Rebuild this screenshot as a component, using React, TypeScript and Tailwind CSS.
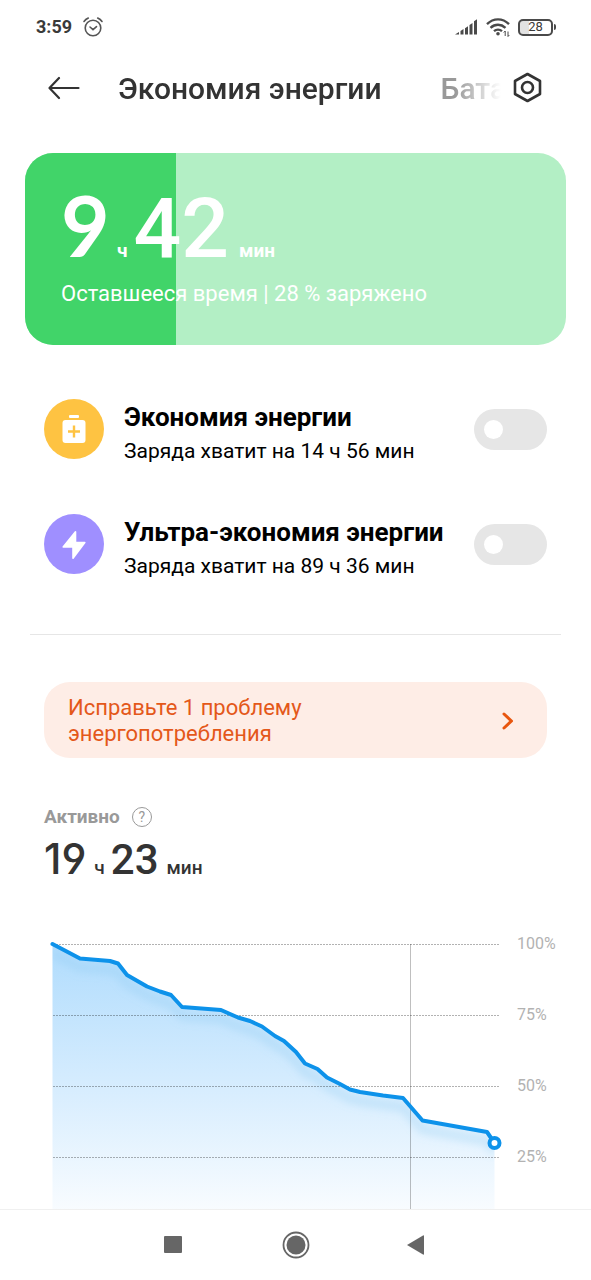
import { useState } from "react"

type Mode = {
  id: string
  title: string
  hint: string
  color: string
  icon: React.ReactNode
}

const modes: Mode[] = [
  {
    id: "saver",
    title: "Экономия энергии",
    hint: "Заряда хватит на 14 ч 56 мин",
    color: "bg-[#fec342]",
    icon: (
      <svg viewBox="0 0 60 60" className="size-full" aria-hidden="true">
        <rect x="25" y="16" width="10" height="3" rx="1" fill="#fff" />
        <rect x="18.500" y="21" width="23" height="23" rx="3" fill="#fff" />
        <path d="M30 26.500v12M24 32.500h12" stroke="#fec342" strokeWidth="2.400" />
      </svg>
    ),
  },
  {
    id: "ultra",
    title: "Ультра-экономия энергии",
    hint: "Заряда хватит на 89 ч 36 мин",
    color: "bg-[#9f8fff]",
    icon: (
      <svg viewBox="0 0 60 60" className="size-full" aria-hidden="true">
        <path
          d="M31.500 17.800V28.500H40.800L29 44.200V33H19.200Z"
          fill="#fff"
          stroke="#fff"
          strokeWidth="1.600"
          strokeLinejoin="round"
        />
      </svg>
    ),
  },
]

const points: [number, number][] = [
  [8.5, 14], [36, 28.5], [66, 31], [74, 33.5], [83, 45], [103, 56.5], [116, 61.5],
  [127, 65], [138, 77], [177, 80], [194, 87.5], [206, 91], [218, 96.5], [231, 106],
  [240, 111], [252, 122], [261, 133.5], [273.5, 139], [283, 147.5], [295, 153.5],
  [306, 159.5], [316, 162], [339, 165.5], [359, 168], [378.5, 190.5], [443, 202], [450.5, 213],
]

const levels = [
  { label: "100%", y: 14.5 },
  { label: "75%", y: 85.5 },
  { label: "50%", y: 156.5 },
  { label: "25%", y: 227.5 },
]

function StatusBar() {
  return (
    <div className="flex h-[54px] items-center justify-between pr-[35px] pl-9 text-[#3a3a3a]">
      <div className="flex items-center gap-2.5">
        <span className="text-lg font-bold">3:59</span>
        <svg width="22" height="22" viewBox="0 0 22 22" fill="none" stroke="#555" strokeWidth="1.6" strokeLinecap="round">
          <circle cx="11" cy="12" r="7.800" />
          <path d="M8 11l3 2.600 3.500-3M2 5.500C3 4 4.500 2.800 6.300 2M20 5.500C19 4 17.500 2.800 15.700 2" />
        </svg>
      </div>
      <div className="flex items-center gap-2">
        <svg width="24" height="18" viewBox="0 0 24 18" fill="#4a4a4a">
          <path d="M1 16.500 5 14v2.500zM6.500 13l3-2v5.500h-3zM11 10.200l3-2v8.300h-3zM15.500 7l3-2v11.500h-3zM20 3.200l3-2v15.300h-3z" />
        </svg>
        <svg width="24" height="20" viewBox="0 0 24 20" fill="none" stroke="#4a4a4a" strokeWidth="2.400">
          <path d="M1 7.200C7.500.8 16.500.8 23 7.200M4.500 10.800c4.500-4 10.500-4 15 0M8 14.200c2.300-2 5.700-2 8 0" />
          <circle cx="12" cy="16.800" r="1.800" fill="#4a4a4a" stroke="none" />
          <path d="M19.200 14v5M17.700 15.500l1.500-1.500M22 19.500v-5M23.300 18 22 19.500" strokeWidth="1" />
        </svg>
        <div className="flex items-center gap-px">
          <div className="flex h-[17px] w-[35px] items-center justify-center rounded-[5px] border-2 border-[#4a4a4a] bg-linear-to-r from-[#e2e2e2] from-28% to-white to-28% text-[13px]">
            28
          </div>
          <div className="h-1.5 w-0.5 rounded-r-sm bg-[#4a4a4a]" />
        </div>
      </div>
    </div>
  )
}

function Header() {
  return (
    <header className="flex h-[68px] items-center px-12">
      <button type="button" aria-label="Назад" className="shrink-0">
        <svg width="32" height="24" viewBox="0 0 32 24" fill="none" stroke="#333" strokeWidth="2.200" strokeLinecap="round" strokeLinejoin="round">
          <path d="M30.500 12H1.500M11 2 1.500 12l9.500 10" />
        </svg>
      </button>
      <nav className="ml-[38px] flex min-w-0 flex-1 gap-[59px] overflow-hidden mask-r-from-88% text-[30px] font-medium whitespace-nowrap">
        <a href="#saver" className="text-[#333]">Экономия энергии</a>
        <a href="#battery" className="text-[#999]">Батарея</a>
      </nav>
      <button type="button" aria-label="Настройки" className="ml-3 shrink-0">
        <svg width="30" height="32" viewBox="0 0 30 32" fill="none" stroke="#333" strokeWidth="2.600" strokeLinejoin="round">
          <path d="M14.500 2 27 9V22L14.500 29 2 22V9Z" />
          <circle cx="14.500" cy="15.500" r="5.500" />
        </svg>
      </button>
    </header>
  )
}

function BatteryCard({ percent }: { percent: number }) {
  return (
    <section className="relative mx-[25px] mt-[31px] h-48 overflow-hidden rounded-[28px] bg-[#b3efc5] text-white">
      <div className="absolute inset-y-0 left-0 bg-[#41d469]" style={{ width: `${percent}%` }} />
      <div className="relative px-9 pt-7">
        <p className="flex h-[97px] items-baseline text-[19px] leading-[88px] font-bold">
          <span className="w-12 font-[Lato,sans-serif] text-[84px]">9</span>
          <span className="mr-1.5 ml-2">ч</span>
          <span className="text-[84px] font-medium">42</span>
          <span className="ml-2.5">мин</span>
        </p>
        <p className="text-[22px] leading-8">Оставшееся время | {percent} % заряжено</p>
      </div>
    </section>
  )
}

function ModeRow({ mode }: { mode: Mode }) {
  const [on, setOn] = useState(false)

  return (
    <div className="flex items-center">
      <div className={`size-[60px] shrink-0 rounded-full ${mode.color}`}>{mode.icon}</div>
      <label htmlFor={mode.id} className="ml-5 flex-1 pt-2 text-black">
        <span className="block text-[26px] leading-9 font-bold">{mode.title}</span>
        <span className="block text-[21px] leading-8">{mode.hint}</span>
      </label>
      <input
        id={mode.id}
        type="checkbox"
        role="switch"
        checked={on}
        onChange={(e) => setOn(e.target.checked)}
        className="flex h-[41px] w-[73px] shrink-0 appearance-none items-center rounded-full bg-[#e6e6e6] px-2.5 before:size-[19px] before:rounded-full before:bg-white checked:justify-end checked:bg-[#0d92ea]"
      />
    </div>
  )
}

function UsageChart() {
  const line = points.map((p) => p.join(",")).join(" ")
  const [endX, endY] = points[points.length - 1]

  return (
    <svg viewBox="0 0 522 320" className="mt-[37px] block w-full" role="img" aria-label="Уровень заряда">
      <defs>
        <linearGradient id="fill" x1="0" y1="14" x2="0" y2="290" gradientUnits="userSpaceOnUse">
          <stop offset="0" stopColor="#b0dcfd" />
          <stop offset="0.5" stopColor="#d5ecfe" />
          <stop offset="1" stopColor="#fbfdff" />
        </linearGradient>
        <filter id="soft" x="-10%" y="-10%" width="120%" height="130%">
          <feGaussianBlur stdDeviation="4" />
        </filter>
        <clipPath id="area">
          <polygon points={`8.500,320 ${line} ${endX},320`} />
        </clipPath>
      </defs>
      <polygon points={`8.500,320 ${line} ${endX},320`} fill="url(#fill)" />
      <g clipPath="url(#area)">
        <polyline points={line} transform="translate(0 9)" fill="none" stroke="#8cc8f2" strokeOpacity="0.35" strokeWidth="8" filter="url(#soft)" />
      </g>
      {levels.map((l) => (
        <g key={l.label}>
          <line x1="9" x2="456" y1={l.y} y2={l.y} stroke="#000" strokeOpacity="0.3" strokeDasharray="2 1" />
          <text x="473" y={l.y + 4} fill="#b2b2b2" fontSize="16">{l.label}</text>
        </g>
      ))}
      <line x1="366.500" x2="366.500" y1="14" y2="320" stroke="#000" strokeOpacity="0.25" />
      <polyline points={line} fill="none" stroke="#0d92ea" strokeWidth="4" strokeLinecap="round" strokeLinejoin="round" />
      <circle cx={endX} cy={endY} r="5" fill="#fff" stroke="#0d92ea" strokeWidth="4" />
    </svg>
  )
}

function NavBar() {
  return (
    <nav className="flex h-[71px] shrink-0 items-center justify-center gap-[94px] border-t border-[#f0f0f0] bg-white">
      <button type="button" aria-label="Недавние">
        <svg width="28" height="28" fill="#666"><rect x="4" y="5" width="18" height="17" rx="1" /></svg>
      </button>
      <button type="button" aria-label="Домой">
        <svg width="28" height="28" fill="#666">
          <circle cx="14" cy="14" r="12.500" fill="none" stroke="#666" strokeWidth="1.800" />
          <circle cx="14" cy="14" r="9.500" />
        </svg>
      </button>
      <button type="button" aria-label="Назад">
        <svg width="28" height="28" fill="#666"><path d="M3 14 19 4.500Q20 4 20 5V23Q20 24 19 23.500Z" /></svg>
      </button>
    </nav>
  )
}

export default function App() {
  return (
    <div className="flex h-screen flex-col bg-white font-[Roboto,sans-serif]">
      <StatusBar />
      <Header />
      <main className="min-h-0 flex-1 overflow-hidden">
        <BatteryCard percent={28} />

        <section className="mx-11 mt-[46px] flex flex-col gap-[39px]">
          {modes.map((m) => (
            <ModeRow key={m.id} mode={m} />
          ))}
        </section>

        <hr className="mx-[30px] mt-[52px] border-[#e6e6e6]" />

        <a
          href="#problems"
          className="mx-11 mt-[47px] flex items-center justify-between rounded-[26px] bg-[#feede6] pt-[13px] pr-8 pb-[11px] pl-6 text-[22px] leading-[26px] text-[#e4581a]"
        >
          <span className="w-64">Исправьте 1 проблему энергопотребления</span>
          <svg width="14" height="20" viewBox="0 0 14 20" fill="none" stroke="#e8560f" strokeWidth="3" strokeLinecap="round" strokeLinejoin="round">
            <path d="M3 3l7.500 7L3 17" />
          </svg>
        </a>

        <section className="mt-[47px] pr-[25px] pl-11">
          <div className="flex items-center gap-3 text-[#999]">
            <h2 className="text-[19px] leading-6 font-bold">Активно</h2>
            <button
              type="button"
              aria-label="Справка"
              className="flex size-5 items-center justify-center rounded-full border border-[#999] text-sm leading-none"
            >
              ?
            </button>
          </div>
          <p className="flex h-[64px] items-baseline text-[19px] leading-[60px] font-medium text-[#333]">
            <span className="font-[Inter,sans-serif] text-[42px] [font-feature-settings:'cv04']">19</span>
            <span className="mr-1.5 ml-2">ч</span>
            <span className="text-[42px]">23</span>
            <span className="ml-2">мин</span>
          </p>
          <UsageChart />
        </section>
      </main>
      <NavBar />
    </div>
  )
}
